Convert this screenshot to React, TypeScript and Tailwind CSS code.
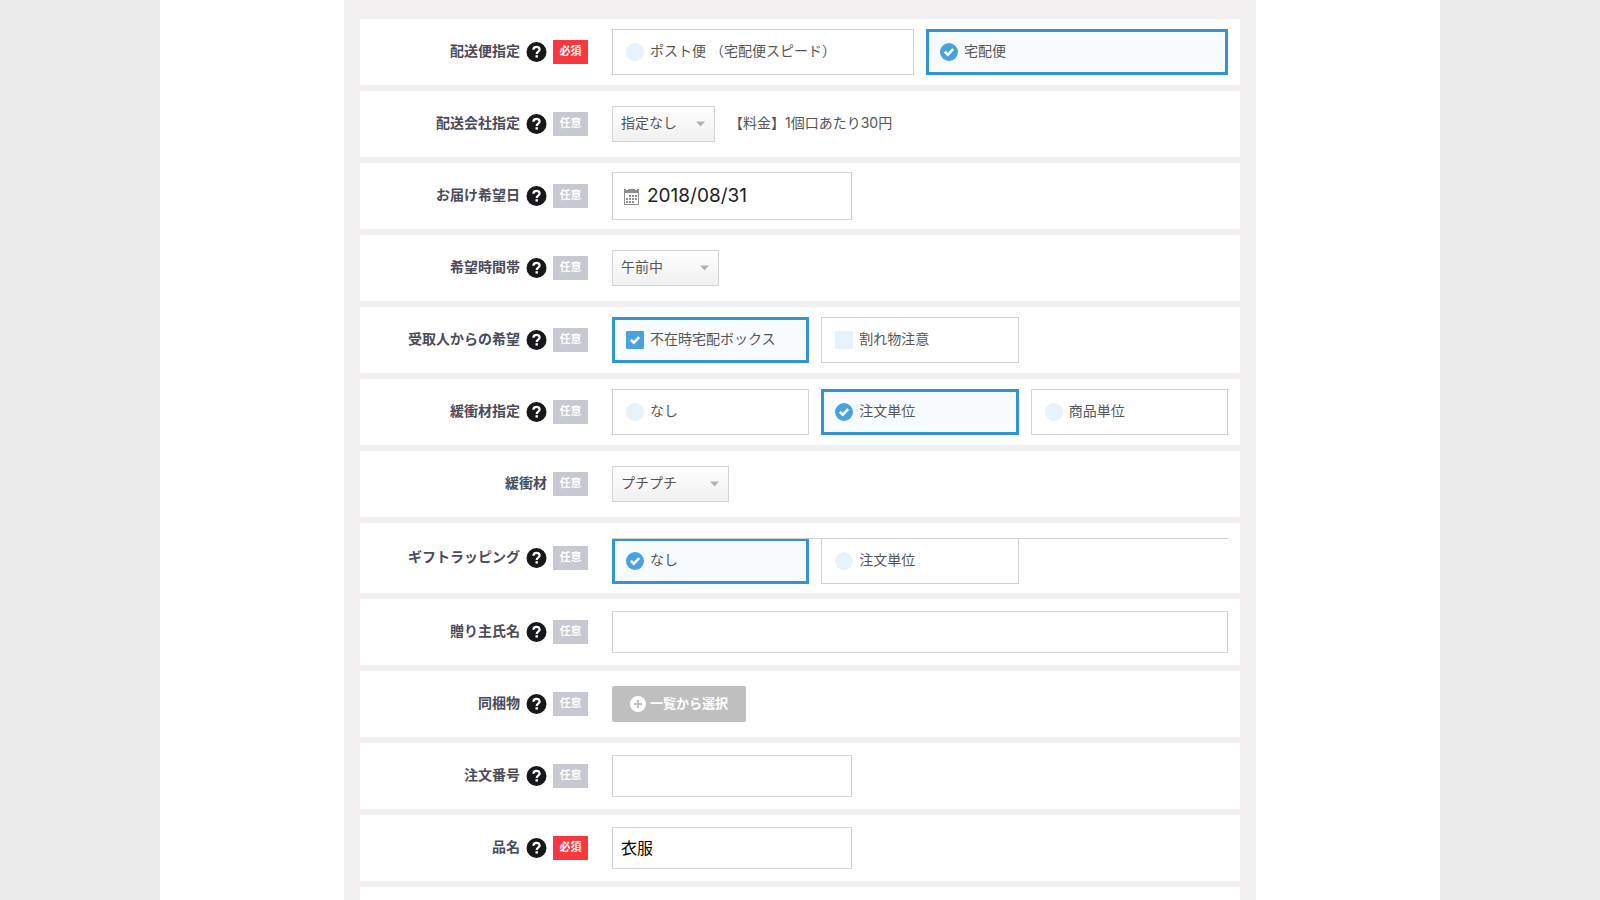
import { useState } from 'react';

type Kind = 'radio' | 'checkbox';

interface RowProps {
  label: string;
  htmlFor?: string;
  labelId?: string;
  required?: boolean;
  help?: boolean;
  tall?: boolean;
  children: React.ReactNode;
}

function Row({ label, htmlFor, labelId, required = false, help = true, tall = false, children }: RowProps) {
  return (
    <div className="flex min-h-[66px] bg-white pr-3">
      <div className="flex w-[228px] shrink-0 items-center justify-end gap-1.5">
        {htmlFor ? (
          <label htmlFor={htmlFor} className="pb-0.5 font-bold text-[#4b4b5a]">{label}</label>
        ) : (
          <span id={labelId} className="pb-0.5 font-bold text-[#4b4b5a]">{label}</span>
        )}
        {help && (
          <button type="button" aria-label={`${label}のヘルプ`} className="shrink-0">
            <HelpIcon />
          </button>
        )}
        <Badge required={required} />
      </div>
      <div className={`ml-6 flex min-w-0 flex-1 items-center ${tall ? 'pt-[15px] pb-[9px]' : 'py-[9px]'}`}>
        {children}
      </div>
    </div>
  );
}

function Badge({ required }: { required: boolean }) {
  return (
    <span
      className={[
        'flex h-6 w-[35px] shrink-0 items-center justify-center text-[11px] font-bold text-white',
        required ? 'bg-[#f8373e]' : 'bg-[#c7c9d2]',
      ].join(' ')}
    >
      {required ? '必須' : '任意'}
    </span>
  );
}

interface OptionsProps {
  kind: Kind;
  name: string;
  labelledBy: string;
  options: string[];
  initial: string[];
  cols?: 2 | 3;
  ruled?: boolean; // hairline along the top edge that the boxes hang from
}

function Options({ kind, name, labelledBy, options, initial, cols = 3, ruled = false }: OptionsProps) {
  const [selected, setSelected] = useState(initial);

  const toggle = (o: string) => {
    if (kind === 'radio') setSelected([o]);
    else setSelected((s) => (s.includes(o) ? s.filter((x) => x !== o) : [...s, o]));
  };

  return (
    <div
      role="group"
      aria-labelledby={labelledBy}
      className={[
        'grid w-full gap-3',
        cols === 2 ? 'grid-cols-2' : 'grid-cols-3',
        ruled ? 'border-t border-[#cfd1d3]' : '',
      ].join(' ')}
    >
      {options.map((o) => {
        const on = selected.includes(o);
        return (
          <label
            key={o}
            className={[
              'flex cursor-pointer items-center gap-1.5',
              ruled ? 'h-[45px]' : 'h-[46px]',
              on ? 'border-3 border-[#3493d1] bg-[#f7fbfe] px-[11px]' : 'border border-[#d0d2d4] bg-white px-[13px]',
              ruled ? (on ? 'border-t-2' : 'border-t-0') : '',
            ].join(' ')}
          >
            <input
              type={kind}
              name={name}
              checked={on}
              onChange={() => toggle(o)}
              className="sr-only"
            />
            <Mark kind={kind} on={on} />
            <span className="pb-0.5">{o}</span>
          </label>
        );
      })}
    </div>
  );
}

function Mark({ kind, on }: { kind: Kind; on: boolean }) {
  return (
    <span
      className={[
        'flex h-[18px] w-[18px] shrink-0 items-center justify-center',
        kind === 'radio' ? 'rounded-full' : 'rounded-[1px]',
        on ? 'bg-[#48a2dd]' : 'bg-[#e6f3fc]',
      ].join(' ')}
      aria-hidden
    >
      {on && (
        <svg width={18} height={18} viewBox="0 0 18 18" fill="none" stroke="#fff" strokeWidth={2.6}>
          <path d="M4.8 8.8 L7.8 11.6 L13.2 6.2" />
        </svg>
      )}
    </span>
  );
}

function Select({ id, width, options }: { id: string; width: string; options: string[] }) {
  return (
    <span className={`relative block h-9 ${width}`}>
      <select
        id={id}
        className="h-full w-full appearance-none border border-[#d0d2d4] bg-linear-to-b from-white to-[#f0f0f0] pr-6 pb-0.5 pl-2 text-[#555]"
      >
        {options.map((o) => <option key={o}>{o}</option>)}
      </select>
      <svg className="pointer-events-none absolute top-[15px] right-2.5" width={9} height={6} viewBox="0 0 9 6" aria-hidden>
        <path d="M0 0.5h9L4.5 5.5z" fill="#b2b2b2" />
      </svg>
    </span>
  );
}

function HelpIcon() {
  return (
    <svg className="block" width={21} height={20} viewBox="0 0 21 20" fill="none" aria-hidden>
      <circle cx={10.5} cy={10} r={10} fill="#17181a" />
      <path d="M7.4 7.8C7.4 5.8 8.8 4.9 10.5 4.9s3.1 1 3.1 2.7c0 2.1-2.9 2.2-2.9 4.4" stroke="#fff" strokeWidth={2.2} />
      <rect x={9.5} y={13.2} width={2.4} height={2.4} fill="#fff" />
    </svg>
  );
}

function CalendarIcon() {
  const dots = [
    [6, 7], [9, 7], [12, 7],
    [3, 10], [6, 10], [9, 10], [12, 10],
    [3, 13], [6, 13], [9, 13],
  ];
  return (
    <svg className="shrink-0" width={15} height={17} viewBox="0 0 15 17" aria-hidden>
      <path d="M0.5 4V16.5H14.5V4" fill="none" stroke="#8e8e8e" />
      <path d="M0 1h2v1h2V1h7v1h2V1h2v4H0z" fill="#8e8e8e" />
      {dots.map(([x, y]) => <rect key={`${x}-${y}`} x={x - 1} y={y} width={2} height={2} fill="#8e8e8e" />)}
    </svg>
  );
}

function PlusIcon() {
  return (
    <svg className="shrink-0" width={16} height={16} viewBox="0 0 16 16" aria-hidden>
      <circle cx={8} cy={8} r={8} fill="#fff" />
      <path d="M8 4v8M4 8h8" stroke="#bfbfbf" strokeWidth={2} />
    </svg>
  );
}

const INPUT = 'h-[42px] border border-[#d0d2d4] bg-white px-2 pb-0.5 text-base text-black';

export default function App() {
  return (
    <div className="min-h-screen bg-[#ebebeb] font-['Inter','Noto_Sans_CJK_JP',sans-serif] text-sm text-[#555]">
      <main className="mx-auto h-screen max-w-[1280px] overflow-hidden bg-white">
        <form
          className="mx-auto flex max-w-[912px] flex-col gap-1.5 bg-[#f2f0f1] px-4 pt-[19px]"
          onSubmit={(e) => e.preventDefault()}
        >
          <Row label="配送便指定" labelId="method" required>
            <Options
              kind="radio"
              name="method"
              labelledBy="method"
              cols={2}
              options={['ポスト便 （宅配便スピード）', '宅配便']}
              initial={['宅配便']}
            />
          </Row>
          <Row label="配送会社指定" htmlFor="carrier">
            <Select id="carrier" width="w-[103px]" options={['指定なし']} />
            <span className="ml-3.5 pb-0.5">【料金】1個口あたり30円</span>
          </Row>
          <Row label="お届け希望日" htmlFor="date">
            <div className="flex h-12 w-[240px] items-center gap-2 border border-[#d0d2d4] bg-white pl-[11px]">
              <CalendarIcon />
              <input id="date" type="text" defaultValue="2018/08/31" className="h-full w-full min-w-0 pb-0.5 text-[19px] text-[#222]" />
            </div>
          </Row>
          <Row label="希望時間帯" htmlFor="time">
            <Select id="time" width="w-[107px]" options={['午前中']} />
          </Row>
          <Row label="受取人からの希望" labelId="request">
            <Options
              kind="checkbox"
              name="request"
              labelledBy="request"
              options={['不在時宅配ボックス', '割れ物注意']}
              initial={['不在時宅配ボックス']}
            />
          </Row>
          <Row label="緩衝材指定" labelId="cushion">
            <Options
              kind="radio"
              name="cushion"
              labelledBy="cushion"
              options={['なし', '注文単位', '商品単位']}
              initial={['注文単位']}
            />
          </Row>
          <Row label="緩衝材" htmlFor="material" help={false}>
            <Select id="material" width="w-[117px]" options={['プチプチ']} />
          </Row>
          <Row label="ギフトラッピング" labelId="gift" tall>
            <Options
              kind="radio"
              name="gift"
              labelledBy="gift"
              options={['なし', '注文単位']}
              initial={['なし']}
              ruled
            />
          </Row>
          <Row label="贈り主氏名" htmlFor="sender">
            <input id="sender" type="text" className={`w-full ${INPUT}`} />
          </Row>
          <Row label="同梱物" labelId="enclosure">
            <button
              type="button"
              className="flex h-9 items-center gap-1 rounded-[2px] bg-[#bfbfbf] px-[18px] text-[13px] font-bold text-white"
            >
              <PlusIcon />
              <span className="pb-0.5">一覧から選択</span>
            </button>
          </Row>
          <Row label="注文番号" htmlFor="order-no">
            <input id="order-no" type="text" className={`w-[240px] ${INPUT}`} />
          </Row>
          <Row label="品名" htmlFor="item" required>
            <input id="item" type="text" defaultValue="衣服" className={`w-[240px] ${INPUT}`} />
          </Row>
          <div className="min-h-[66px] bg-white" />
        </form>
      </main>
    </div>
  );
}
